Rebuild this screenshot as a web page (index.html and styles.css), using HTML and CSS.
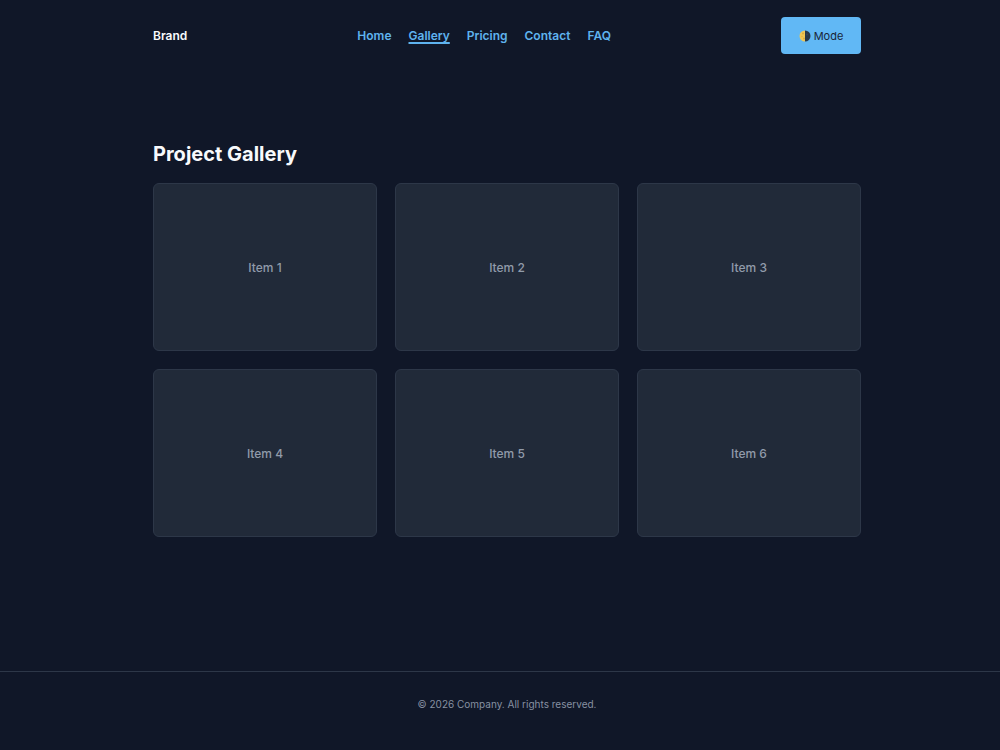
FILE: index.html
```html
<!DOCTYPE html>
<html lang="en">
<head>
<meta charset="utf-8">
<meta name="viewport" content="width=device-width, initial-scale=1">
<title>Project Gallery</title>
<link rel="stylesheet" href="styles.css">
</head>
<body class="page">
<header class="site-header">
  <div class="container header-bar">
    <span class="brand">Brand</span>
    <nav class="nav" aria-label="Main">
      <a class="nav-link" href="#home">Home</a>
      <a class="nav-link nav-link-active" href="#gallery" aria-current="page">Gallery</a>
      <a class="nav-link" href="#pricing">Pricing</a>
      <a class="nav-link" href="#contact">Contact</a>
      <a class="nav-link" href="#faq">FAQ</a>
    </nav>
    <button class="mode-button" type="button">
      <svg class="mode-icon" viewBox="0 0 24 24" aria-hidden="true">
        <path d="M12 1a11 11 0 0 0 0 22z" fill="#f0c755"/>
        <path d="M12 1a11 11 0 0 1 0 22z" fill="#283849"/>
        <circle cx="8" cy="7" r="1.8" fill="#d6a83f"/>
        <circle cx="6" cy="13" r="1.4" fill="#dcb047"/>
        <circle cx="10" cy="17" r="1.8" fill="#d6a83f"/>
        <circle cx="16" cy="9" r="2" fill="#354656"/>
      </svg>
      <span>Mode</span>
    </button>
  </div>
</header>
<main class="main">
  <div class="container">
    <h1 class="title">Project Gallery</h1>
    <div class="gallery">
      <div class="card">Item 1</div>
      <div class="card">Item 2</div>
      <div class="card">Item 3</div>
      <div class="card">Item 4</div>
      <div class="card">Item 5</div>
      <div class="card">Item 6</div>
    </div>
  </div>
</main>
<footer class="site-footer">
  <p class="copyright">© 2026 Company. All rights reserved.</p>
</footer>
</body>
</html>
```

FILE: styles.css
```css
* {
  box-sizing: border-box;
}

.page {
  margin: 0;
  min-height: 100vh;
  display: flex;
  flex-direction: column;
  background: #101728;
  color: #f8fafc;
  font-family: Inter, "Liberation Sans", sans-serif;
  font-size: 12px;
  line-height: 18px;
}

.site-header,
.main,
.site-footer {
  padding-left: 14px;
}

.container {
  width: 100%;
  max-width: 708px;
  margin: 0 auto;
}

.header-bar {
  display: flex;
  align-items: center;
  justify-content: space-between;
  padding: 17px 0;
}

.brand {
  font-weight: 600;
}

.nav {
  display: flex;
  gap: 17px;
}

.nav-link {
  color: #5fb3ee;
  font-weight: 600;
  text-decoration: none;
}

.nav-link-active {
  text-decoration: underline;
  text-decoration-thickness: 2px;
  text-decoration-skip-ink: none;
  text-underline-offset: 2px;
}

.mode-button {
  display: flex;
  align-items: center;
  justify-content: center;
  gap: 3px;
  width: 80px;
  height: 37px;
  padding: 0;
  border: 0;
  border-radius: 4px;
  background: #61b8f5;
  color: #1a2638;
  font: inherit;
  font-size: 11px;
  cursor: pointer;
}

.mode-icon {
  width: 12px;
  height: 12px;
}

.main {
  flex: 1;
  padding-top: 68px;
}

.title {
  margin: 0 0 14px;
  font-size: 20px;
  line-height: 30px;
  font-weight: 700;
}

.gallery {
  display: grid;
  grid-template-columns: repeat(3, 1fr);
  gap: 18px;
}

.card {
  display: flex;
  align-items: center;
  justify-content: center;
  aspect-ratio: 4 / 3;
  padding-top: 2px;
  border: 1px solid #2d3748;
  border-radius: 6px;
  background: #212a39;
  color: #919baa;
  font-weight: 500;
}

.site-footer {
  padding-top: 24px;
  padding-bottom: 37px;
  border-top: 1px solid #2d3748;
  text-align: center;
}

.copyright {
  margin: 0;
  color: #8791a2;
  font-size: 10px;
  line-height: 17px;
}
```
